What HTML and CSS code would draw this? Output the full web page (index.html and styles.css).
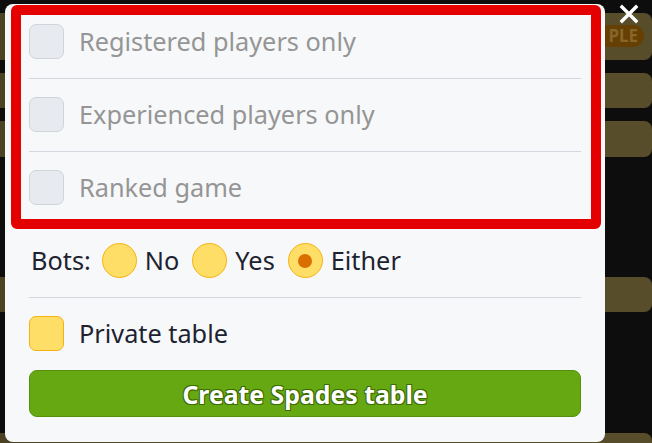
FILE: index.html
```html
<!DOCTYPE html>
<html>
<head>
<meta charset="utf-8">
<link rel="stylesheet" href="styles.css">
</head>
<body>
<div class="bg">
  <div class="panel p1"><span class="badge">PLE</span></div>
  <div class="panel p2"></div>
  <div class="panel p3"></div>
  <div class="panel p4"></div>
  <div class="panel p5"></div>
</div>

<svg class="close" width="20" height="20" viewBox="0 0 20 20"><path d="M3 3 L17 17 M17 3 L3 17" stroke="#fff" stroke-width="3.4" stroke-linecap="square"/></svg>

<div class="modal">
  <div class="highlight">
    <label class="row">
      <span class="box disabled"></span>
      <span class="lbl muted">Registered players only</span>
    </label>
    <label class="row">
      <span class="box disabled"></span>
      <span class="lbl muted">Experienced players only</span>
    </label>
    <label class="row last">
      <span class="box disabled"></span>
      <span class="lbl muted">Ranked game</span>
    </label>
  </div>

  <div class="bots">
    <span class="lbl">Bots:</span>
    <span class="opt"><span class="radio"></span><span class="lbl">No</span></span>
    <span class="opt"><span class="radio"></span><span class="lbl">Yes</span></span>
    <span class="opt"><span class="radio on"></span><span class="lbl">Either</span></span>
  </div>

  <label class="private">
    <span class="box yellow"></span>
    <span class="lbl">Private table</span>
  </label>

  <button class="create">Create Spades table</button>
</div>
</body>
</html>
```
FILE: styles.css
```css
* { box-sizing: border-box; }
html, body { margin: 0; padding: 0; }
body {
  width: 652px;
  height: 443px;
  background: #0d0d0d;
  font-family: "Noto Sans", "Open Sans", sans-serif;
  position: relative;
  overflow: hidden;
}
.bg { display: flex; flex-direction: column; }
.panel {
  background: linear-gradient(90deg, #4b4224 0%, #584d2b 30%, #584d2b 100%);
  border-radius: 0 8px 8px 0;
  position: relative;
}
.p1 { margin-top: 13px; height: 47px; }
.p2 { margin-top: 13px; height: 35px; }
.p3 { margin-top: 13px; height: 36px; }
.p4 { margin-top: 120px; height: 35px; }
.p5 { margin-top: 121px; height: 20px; }
.badge {
  position: absolute;
  right: 8px;
  top: 12px;
  height: 22px;
  padding: 0 6px 0 40px;
  border-radius: 11px;
  background: #663f02;
  color: #86662a;
  font-weight: 700;
  font-size: 17px;
  line-height: 22px;
}
.close { position: absolute; left: 619px; top: 4px; }

.modal {
  position: absolute;
  left: 5px;
  top: 4px;
  width: 600px;
  height: 438px;
  background: #f7f8fa;
  border-radius: 8px;
  padding: 0 24px;
}
.highlight {
  margin: 1px -20px 0 -18px;
  border: 10px solid #e50000;
  border-radius: 6px;
  padding: 0 10px 0 8px;
}
.row {
  display: flex;
  align-items: center;
  gap: 15px;
  padding: 18px 0 19px;
  border-bottom: 1px solid #d4d7dd;
}
.row:first-child { padding-top: 9px; }
.row.last { border-bottom: none; padding-bottom: 14px; }
.box {
  width: 35px;
  height: 35px;
  border-radius: 7px;
  flex: none;
}
.box.disabled { background: #e7eaee; border: 1.5px solid #d1d5db; }
.box.yellow { background: #ffde68; border: 1.5px solid #f7b212; }
.lbl { font-size: 25.3px; color: #1e2230; line-height: 35px; }
.lbl.muted { color: #959595; }

.bots {
  display: flex;
  align-items: center;
  padding: 14px 0 19px 2px;
  border-bottom: 1px solid #d4d7dd;
}
.bots > .lbl { margin-right: 11px; }
.opt { display: flex; align-items: center; gap: 8px; margin-right: 13px; }
.radio {
  width: 35px;
  height: 35px;
  border-radius: 50%;
  background: #ffde68;
  border: 1.5px solid #f7b212;
  display: flex;
  align-items: center;
  justify-content: center;
}
.radio.on::after {
  content: "";
  width: 14px;
  height: 14px;
  border-radius: 50%;
  background: #d96f00;
}

.private {
  display: flex;
  align-items: center;
  gap: 15px;
  padding: 18px 0 19px;
}
.create {
  display: block;
  width: 100%;
  height: 47px;
  background: #66a812;
  border: 1.5px solid #558f0b;
  border-radius: 8px;
  color: #fff;
  font-family: "Noto Sans", "Open Sans", sans-serif;
  font-weight: 700;
  font-size: 24.8px;
  padding: 0;
  text-shadow: 1px 1px 0 #3d6b04, -1px -1px 0 #3d6b04, 1px -1px 0 #3d6b04, -1px 1px 0 #3d6b04;
}
```
